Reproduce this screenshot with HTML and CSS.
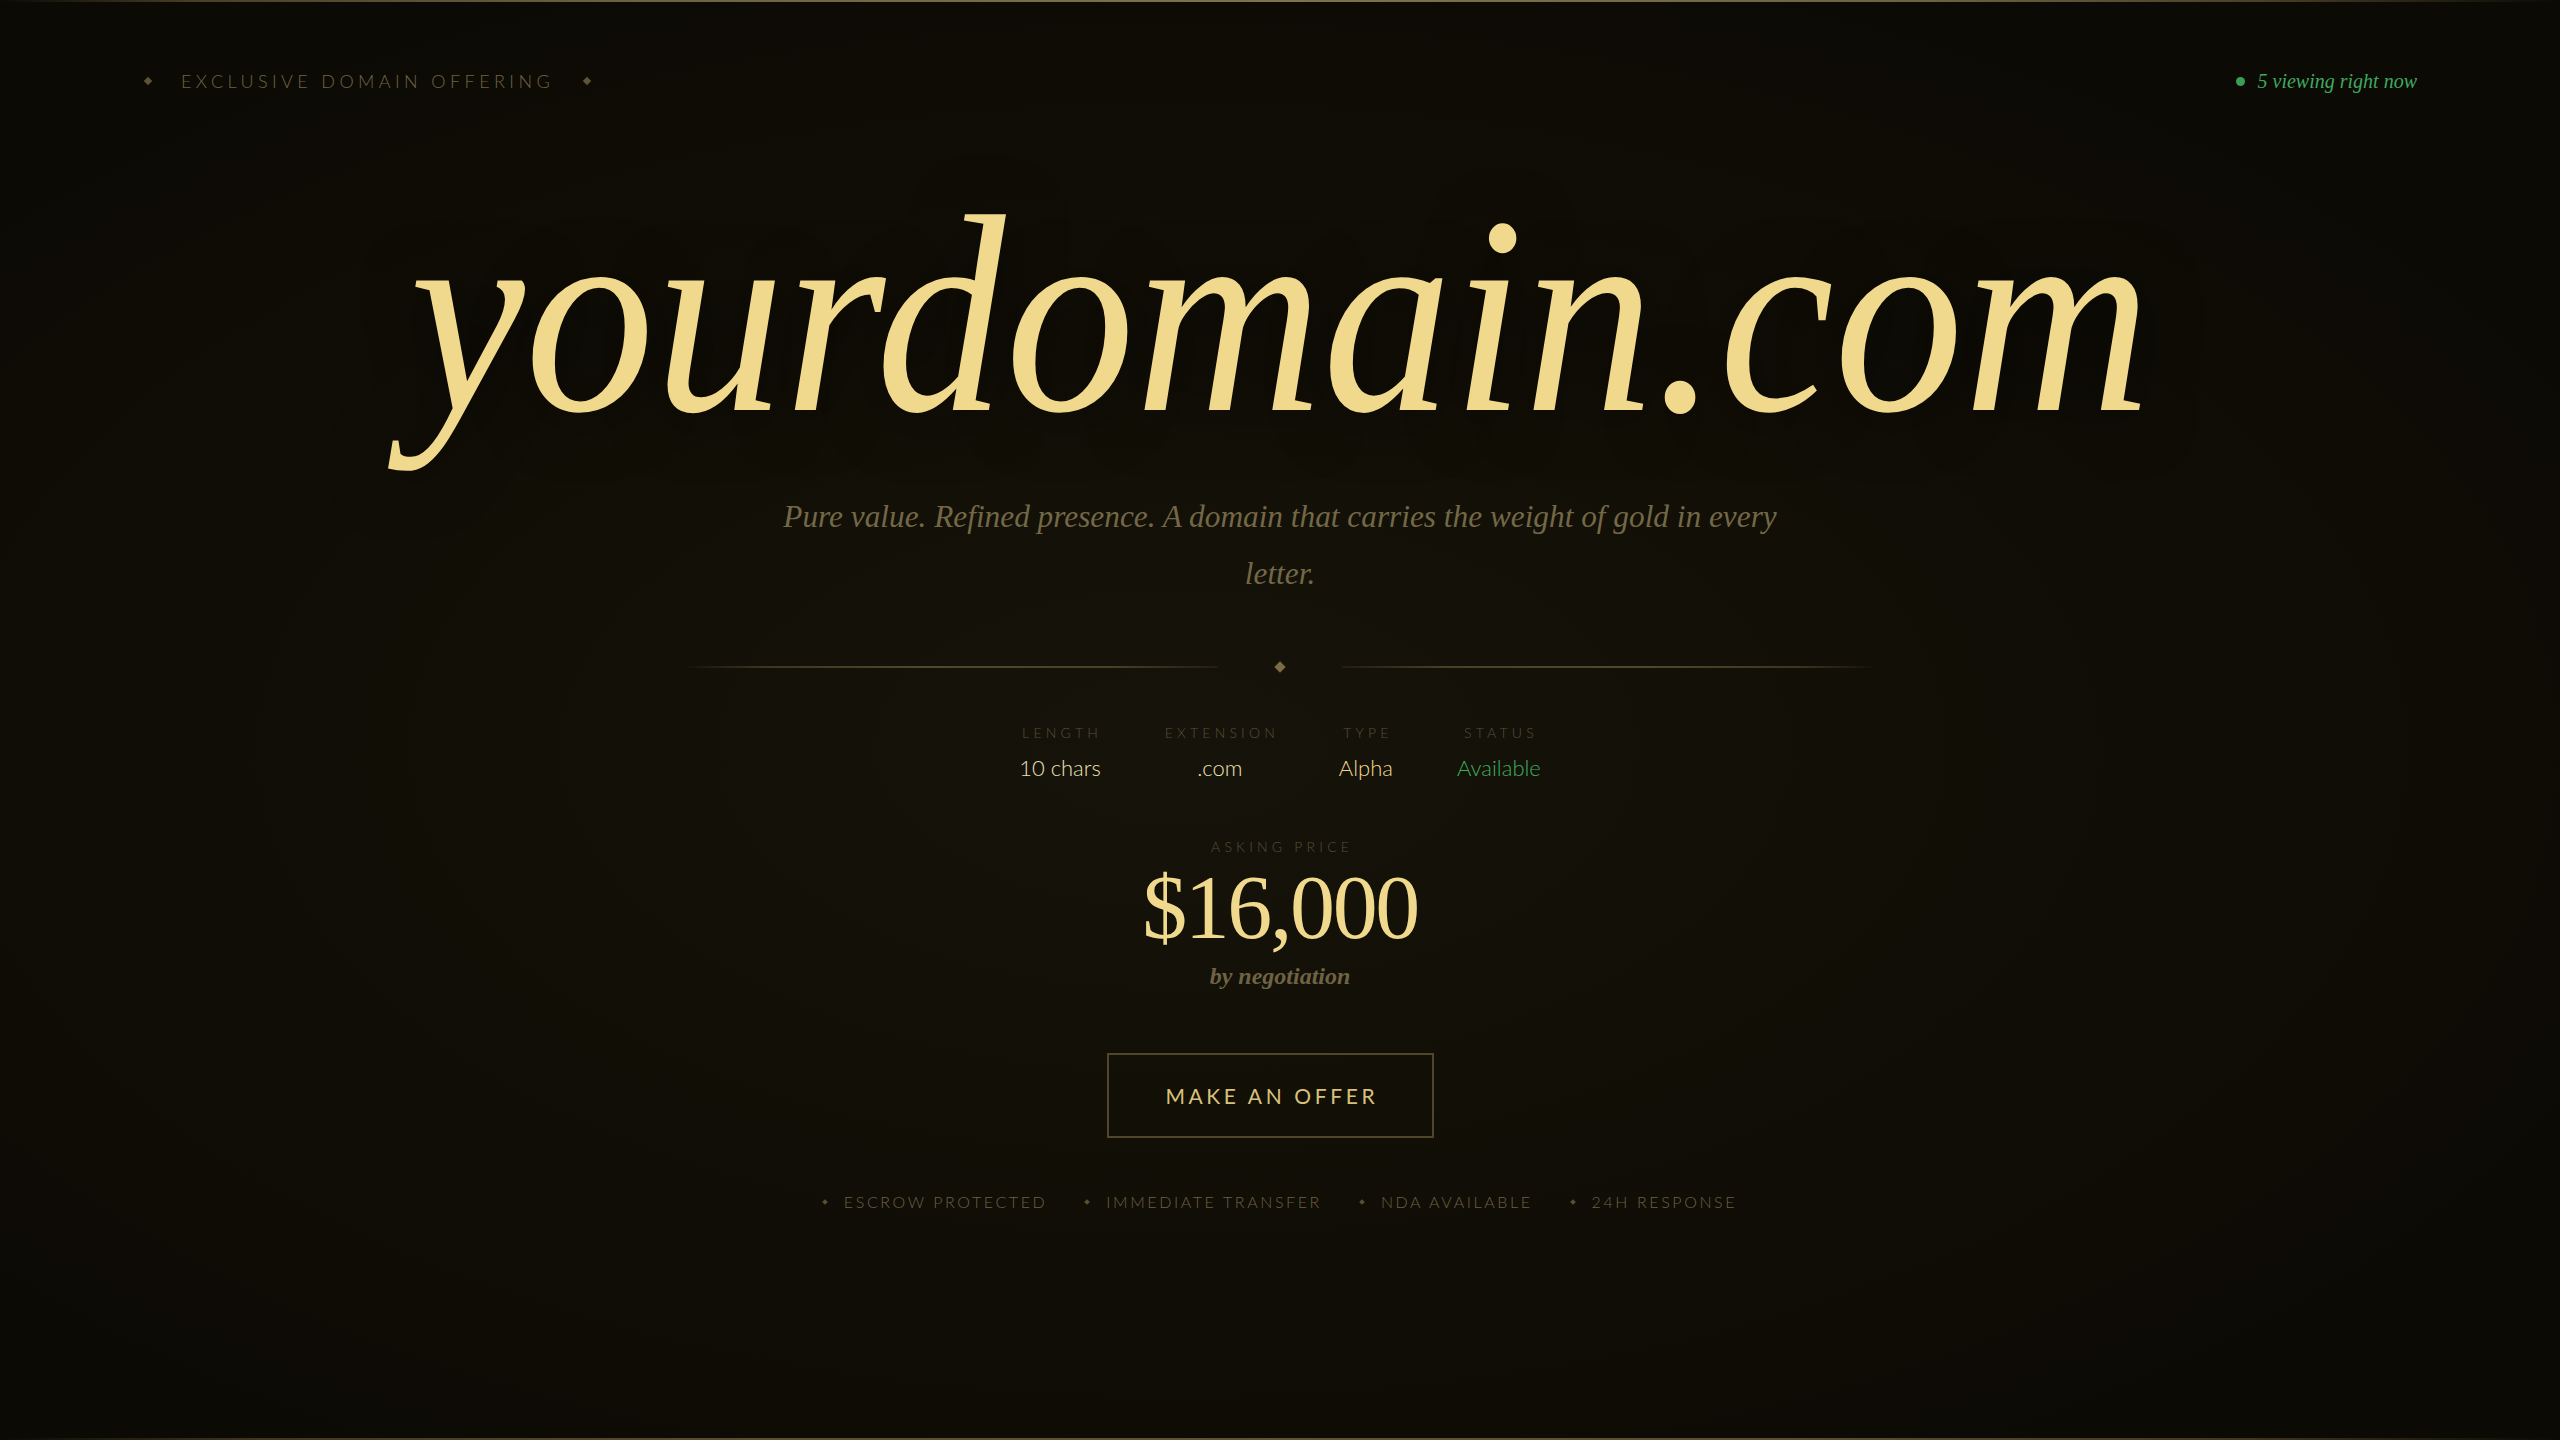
FILE: index.html
```html
<!DOCTYPE html>
<html lang="en">
<head>
<meta charset="utf-8">
<title>yourdomain.com</title>
<link rel="stylesheet" href="styles.css">
</head>
<body>
<div class="page">
  <div class="edge edge-top"></div>
  <header class="topbar">
    <div class="offering">
      <span class="gem"></span>
      <span class="offering-text">EXCLUSIVE DOMAIN OFFERING</span>
      <span class="gem"></span>
    </div>
    <div class="viewing">
      <span class="live-dot"></span>
      <span class="viewing-text">5 viewing right now</span>
    </div>
  </header>

  <main class="hero">
    <h1 class="domain">yourdomain.com</h1>
    <p class="tagline">Pure value. Refined presence. A domain that carries the weight of gold in every letter.</p>

    <div class="divider">
      <span class="rule rule-left"></span>
      <span class="divider-gem"></span>
      <span class="rule rule-right"></span>
    </div>

    <div class="stats">
      <div class="stat">
        <span class="stat-label">LENGTH</span>
        <span class="stat-value cream">10 chars</span>
      </div>
      <div class="stat">
        <span class="stat-label">EXTENSION</span>
        <span class="stat-value cream">.com</span>
      </div>
      <div class="stat">
        <span class="stat-label">TYPE</span>
        <span class="stat-value gold">Alpha</span>
      </div>
      <div class="stat">
        <span class="stat-label">STATUS</span>
        <span class="stat-value green">Available</span>
      </div>
    </div>

    <div class="price-block">
      <span class="price-label">ASKING PRICE</span>
      <span class="price">$16,000</span>
      <span class="price-note">by negotiation</span>
    </div>

    <button class="offer-btn" type="button">MAKE AN OFFER</button>

    <ul class="features">
      <li class="feature"><span class="mini-gem"></span>ESCROW PROTECTED</li>
      <li class="feature"><span class="mini-gem"></span>IMMEDIATE TRANSFER</li>
      <li class="feature"><span class="mini-gem"></span>NDA AVAILABLE</li>
      <li class="feature"><span class="mini-gem"></span>24H RESPONSE</li>
    </ul>
  </main>

  <div class="edge edge-bottom"></div>
</div>
</body>
</html>
```

FILE: styles.css
```css
* {
  box-sizing: border-box;
}

html, body {
  margin: 0;
  padding: 0;
}

body {
  background: #0c0a04;
  color: #e9d48a;
  font-family: "Lato", "Liberation Sans", sans-serif;
}

.page {
  min-height: 100vh;
  display: flex;
  flex-direction: column;
  background:
    radial-gradient(ellipse 62% 58% at 46% 52%, #16130a 0%, #120f07 45%, #0c0a04 100%);
}

.edge {
  height: 2px;
  flex: 0 0 2px;
}

.edge-top {
  background: linear-gradient(90deg, rgba(110, 96, 58, 0) 0%, #4a4128 8%, #6e6340 25%, #80734a 50%, #6e6340 75%, #4a4128 88%, rgba(110, 96, 58, 0) 100%);
}

.edge-bottom {
  margin-top: auto;
  background: linear-gradient(90deg, rgba(90, 80, 48, 0) 0%, #3e3620 10%, #5a5030 30%, #5e5434 50%, #5a5030 70%, #3e3620 88%, rgba(90, 80, 48, 0) 100%);
}

/* header */
.topbar {
  display: flex;
  justify-content: space-between;
  align-items: center;
  padding: 66px 143px 0 145px;
  height: 92px;
}

.offering {
  display: flex;
  align-items: center;
  gap: 30px;
}

.gem {
  width: 6px;
  height: 6px;
  background: #5d5335;
  transform: rotate(45deg);
}

.offering-text {
  font-size: 18px;
  font-weight: 300;
  letter-spacing: 4.4px;
  color: #6f6443;
  line-height: 24px;
}

.viewing {
  display: flex;
  align-items: center;
  gap: 13px;
}

.live-dot {
  width: 9px;
  height: 9px;
  border-radius: 50%;
  background: #3b9e57;
}

.viewing-text {
  font-family: "Liberation Serif", serif;
  font-style: italic;
  font-size: 20px;
  color: #3fa95e;
  line-height: 24px;
}

/* hero */
.hero {
  display: flex;
  flex-direction: column;
  align-items: center;
}

.domain {
  margin: 80px 0 0;
  font-family: "Liberation Serif", serif;
  font-style: italic;
  font-weight: 400;
  font-size: 282px;
  line-height: 1;
  color: #f0d98c;
  transform: scaleX(0.92);
  text-shadow: 0 6px 60px rgba(0, 0, 0, 0.55);
  white-space: nowrap;
}

.tagline {
  margin: 32px 0 0;
  max-width: 1010px;
  text-align: center;
  font-family: "Liberation Serif", serif;
  font-style: italic;
  font-size: 31.3px;
  line-height: 57px;
  color: #736846;
}

.divider {
  margin-top: 59px;
  display: flex;
  align-items: center;
  gap: 58px;
  height: 12px;
}

.rule {
  width: 536px;
  height: 2px;
}

.rule-left {
  background: linear-gradient(90deg, rgba(80, 71, 43, 0) 0%, #3c3520 15%, #524830 45%, #4a4129 80%, rgba(80, 71, 43, 0.2) 100%);
}

.rule-right {
  background: linear-gradient(90deg, rgba(80, 71, 43, 0.2) 0%, #4a4129 20%, #524830 55%, #3c3520 85%, rgba(80, 71, 43, 0) 100%);
}

.divider-gem {
  width: 8px;
  height: 8px;
  background: #7a6c45;
  transform: rotate(45deg);
}

.stats {
  margin-top: 50px;
  display: flex;
  gap: 64px;
}

.stat {
  display: flex;
  flex-direction: column;
  align-items: center;
  gap: 10px;
}

.stat-label {
  font-size: 14px;
  font-weight: 300;
  letter-spacing: 4.2px;
  line-height: 20px;
  color: #575038;
  margin-right: -4.2px;
}

.stat-value {
  font-size: 22px;
  font-weight: 300;
  line-height: 30px;
}

.cream {
  color: #ece0b4;
}

.gold {
  color: #f0dc8e;
}

.green {
  color: #3fae5f;
}

.price-block {
  margin-top: 54px;
  display: flex;
  flex-direction: column;
  align-items: center;
}

.price-label {
  font-size: 14px;
  font-weight: 300;
  letter-spacing: 4.2px;
  line-height: 20px;
  color: #575038;
  margin-right: -4.2px;
}

.price {
  margin-top: 6px;
  font-family: "Liberation Serif", serif;
  font-size: 90px;
  line-height: 1;
  letter-spacing: -2.4px;
  color: #f0d98c;
}

.price-note {
  margin-top: 8px;
  font-family: "Liberation Serif", serif;
  font-style: italic;
  font-weight: 700;
  font-size: 24px;
  line-height: 30px;
  color: #6e6343;
}

.offer-btn {
  margin: 62px 20px 0 0;
  width: 327px;
  height: 85px;
  padding: 0;
  background: transparent;
  border: 2px solid #50472b;
  color: #d8c27a;
  font-family: "Lato", "Liberation Sans", sans-serif;
  font-size: 21px;
  font-weight: 400;
  letter-spacing: 3.6px;
  text-indent: 3.6px;
  cursor: pointer;
}

.features {
  list-style: none;
  margin: 53px 0 0;
  padding: 0;
  display: flex;
  gap: 38px;
}

.feature {
  display: flex;
  align-items: center;
  gap: 17px;
  font-size: 16px;
  font-weight: 300;
  letter-spacing: 2.6px;
  line-height: 22px;
  color: #6b6143;
}

.mini-gem {
  width: 4px;
  height: 4px;
  background: #5a5034;
  transform: rotate(45deg);
}
```
